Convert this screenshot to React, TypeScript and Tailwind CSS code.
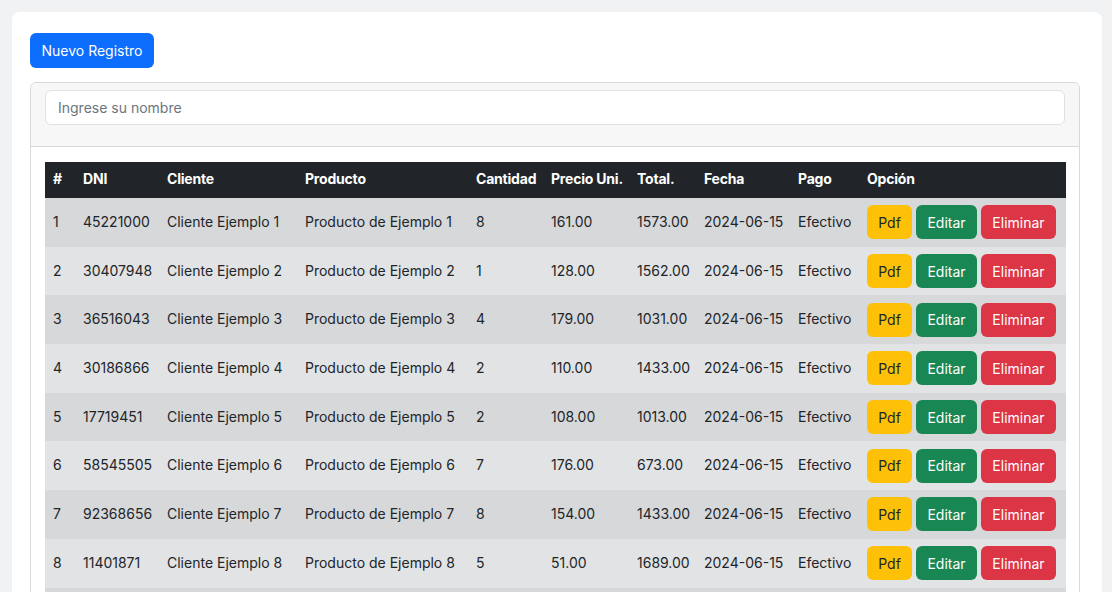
import React from "react";

const rows = [
  [1, "45221000", 1, 8, "161.00", "1573.00"],
  [2, "30407948", 2, 1, "128.00", "1562.00"],
  [3, "36516043", 3, 4, "179.00", "1031.00"],
  [4, "30186866", 4, 2, "110.00", "1433.00"],
  [5, "17719451", 5, 2, "108.00", "1013.00"],
  [6, "58545505", 6, 7, "176.00", "673.00"],
  [7, "92368656", 7, 8, "154.00", "1433.00"],
  [8, "11401871", 8, 5, "51.00", "1689.00"],
];

const widths = [30, 84, 138, 171, 75, 86, 67, 94, 69, 207];
const heads = ["#", "DNI", "Cliente", "Producto", "Cantidad", "Precio Uni.", "Total.", "Fecha", "Pago", "Opción"];

export default function App() {
  return (
    <div
      className="h-[592px] overflow-hidden bg-[#f1f2f4] pl-3 pr-[10px] pt-3 text-[#212529]"
      style={{ fontFamily: "Inter, 'Noto Sans', sans-serif" }}
    >
      <div className="min-h-[700px] rounded-lg bg-white px-[18px] pt-[21px]">
        <button className="h-[35px] w-[124px] rounded-md bg-[#0d6efd] text-[14px] text-white">
          Nuevo Registro
        </button>
        <div className="mt-[14px] w-[1050px] rounded-md border border-[#d9d9d9]">
          <div className="h-[64px] rounded-t-md border-b border-[#d9d9d9] bg-[#f7f7f7] px-[14px] pt-[7px]">
            <div className="flex h-[35px] items-center rounded-md border border-[#dee2e6] bg-white px-3 text-[14px] text-[#6c757d]">
              Ingrese su nombre
            </div>
          </div>
          <div className="px-[14px] pt-[15px]">
            <table className="w-[1021px] table-fixed border-collapse text-[14px] whitespace-nowrap">
              <colgroup>
                {widths.map((w, i) => (
                  <col key={i} style={{ width: w }} />
                ))}
              </colgroup>
              <thead>
                <tr className="h-[36px] bg-[#212529] text-left text-white">
                  {heads.map((h) => (
                    <th key={h} className="px-2 pb-[4px] font-bold tracking-[-0.2px]">
                      {h}
                    </th>
                  ))}
                </tr>
              </thead>
              <tbody>
                {rows.map((r, i) => (
                  <tr key={i} className={`h-[48.7px] ${i % 2 === 0 ? "bg-[#d7d8da]" : "bg-[#e2e3e5]"}`}>
                    <td className="px-2 pb-[2px]">{r[0]}</td>
                    <td className="px-2 pb-[2px]">{r[1]}</td>
                    <td className="px-2 pb-[2px]">Cliente Ejemplo {r[2]}</td>
                    <td className="px-2 pb-[2px]">Producto de Ejemplo {r[2]}</td>
                    <td className="px-2 pb-[2px]">{r[3]}</td>
                    <td className="px-2 pb-[2px]">{r[4]}</td>
                    <td className="px-2 pb-[2px]">{r[5]}</td>
                    <td className="px-2 pb-[2px]">2024-06-15</td>
                    <td className="px-2 pb-[2px]">Efectivo</td>
                    <td className="px-2">
                      <div className="flex gap-1">
                        <button className="h-[34px] w-[45px] rounded-md bg-[#ffc107] text-[#212529]">Pdf</button>
                        <button className="h-[34px] w-[61px] rounded-md bg-[#198754] text-white">Editar</button>
                        <button className="h-[34px] w-[75px] rounded-md bg-[#dc3545] text-white">Eliminar</button>
                      </div>
                    </td>
                  </tr>
                ))}
                <tr className="h-[49px] bg-[#d7d8da]">
                  <td colSpan={10}></td>
                </tr>
              </tbody>
            </table>
          </div>
        </div>
      </div>
    </div>
  );
}
